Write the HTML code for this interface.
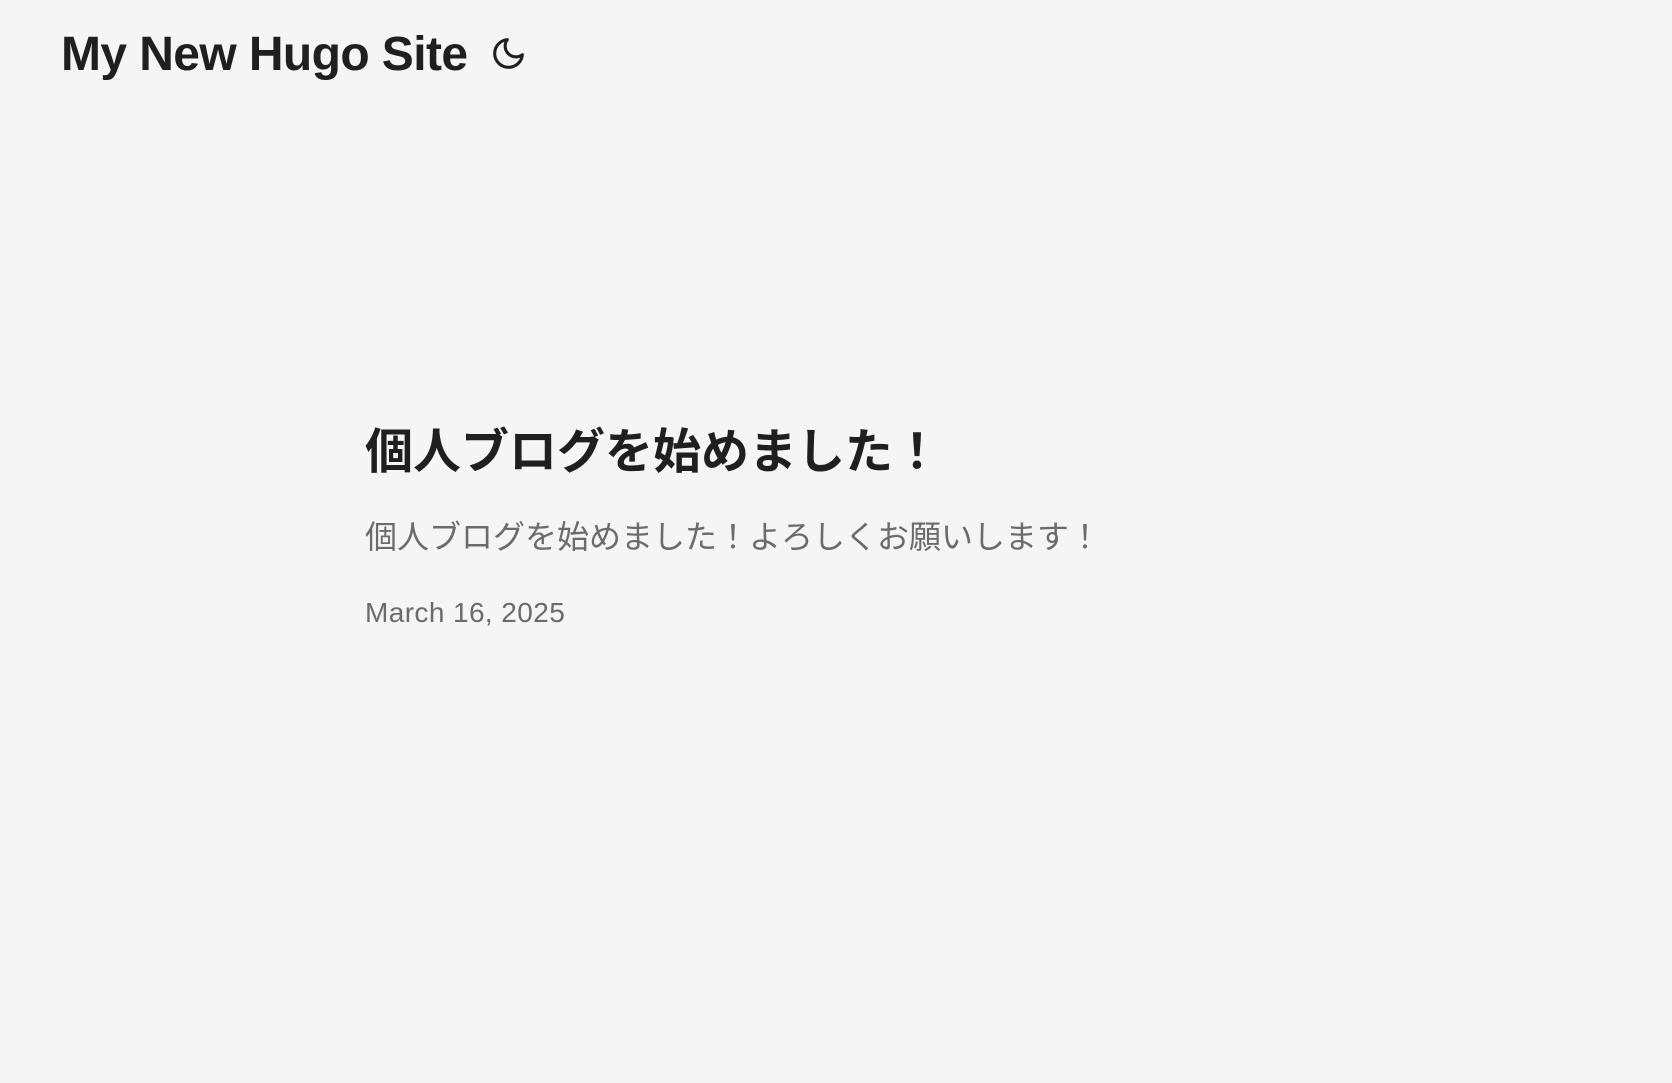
<!DOCTYPE html>
<html><head><meta charset="utf-8"><style>
html,body{margin:0;padding:0;background:#f5f5f5;width:1672px;height:1083px;overflow:hidden;}
body{position:relative;font-family:"Liberation Sans","Noto Sans CJK JP",sans-serif;color:#1f1f1f;}
.t{position:absolute;white-space:nowrap;line-height:1;}
</style></head><body>
<div class="t" style="left:61px;top:31px;font-size:48px;font-weight:bold;letter-spacing:-0.6px;">My New Hugo Site</div>
<svg style="position:absolute;left:490px;top:35px" width="37" height="37" viewBox="0 0 24 24" fill="none" stroke="#1f1f1f" stroke-width="2" stroke-linecap="round" stroke-linejoin="round"><path d="M21 12.79A9 9 0 1 1 11.21 3 7 7 0 0 0 21 12.79z"/></svg>
<div class="t" style="left:365px;top:429px;font-size:48px;font-weight:bold;">個人ブログを始めました！</div>
<div class="t" style="left:365px;top:521px;font-size:32px;color:#6b6b6b;">個人ブログを始めました！よろしくお願いします！</div>
<div class="t" style="left:365px;top:599px;font-size:28px;color:#6b6b6b;letter-spacing:0.4px;">March 16, 2025</div>
</body></html>
